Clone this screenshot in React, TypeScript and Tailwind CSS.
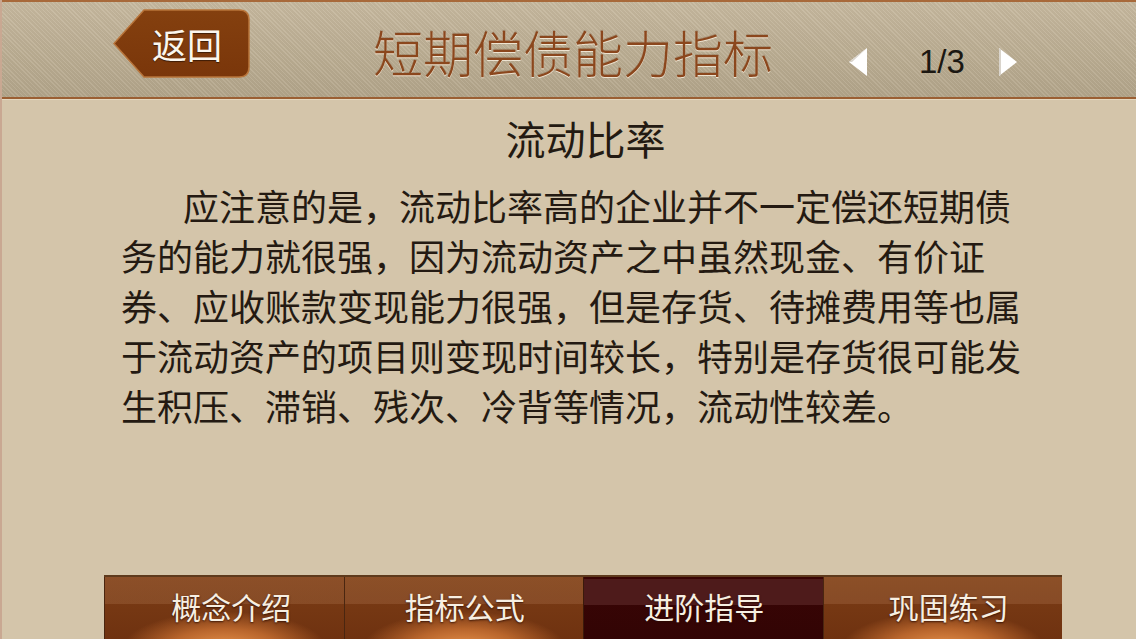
import React from "react";

const cjk = { fontFamily: '"Noto Sans CJK SC", "Noto Sans", sans-serif' };

const lines = [
  "应注意的是，流动比率高的企业并不一定偿还短期债",
  "务的能力就很强，因为流动资产之中虽然现金、有价证",
  "券、应收账款变现能力很强，但是存货、待摊费用等也属",
  "于流动资产的项目则变现时间较长，特别是存货很可能发",
  "生积压、滞销、残次、冷背等情况，流动性较差。",
];

const tabs = [
  { t: "概念介绍", pad: "pl-[14px]" },
  { t: "指标公式", pad: "pl-[2px]" },
  { t: "进阶指导", pad: "pl-[2px]" },
  { t: "巩固练习", pad: "pl-[12px]" },
];

function BackButton() {
  return (
    <div className="relative w-[137px] h-[69px] mt-[7px] flex items-center pl-[39px] shrink-0">
      <svg className="absolute inset-0" width="137" height="69" viewBox="0 0 137 69">
        <defs>
          <linearGradient id="bb" x1="0" y1="0" x2="0" y2="1">
            <stop offset="0" stopColor="#84400f" />
            <stop offset="1" stopColor="#7a360a" />
          </linearGradient>
        </defs>
        <path
          d="M1,34.5 L31,1 H126 Q136,1 136,11 V58 Q136,68 126,68 H31 Z"
          fill="url(#bb)"
          stroke="#b8743a"
          strokeWidth="1.5"
        />
      </svg>
      <span className="relative text-[35px] leading-[35px] text-[#fbf6ee] [text-shadow:0_1px_1px_rgba(0,0,0,0.5)]" style={cjk}>
        返回
      </span>
    </div>
  );
}

function Tri({ dir }: { dir: "l" | "r" }) {
  return (
    <svg width="18" height="28" viewBox="0 0 18 28" className="shrink-0">
      {dir === "l" ? (
        <>
          <polygon points="18,0 18,28 0,14" fill="#ffffff" />
          <polygon points="18,0 0,14 3,14" fill="#d9d4cc" />
        </>
      ) : (
        <>
          <polygon points="0,0 0,28 18,14" fill="#ffffff" />
          <polygon points="0,0 0,28 2,27 2,1" fill="#d9d4cc" />
        </>
      )}
    </svg>
  );
}

export default function App() {
  return (
    <div className="w-[1136px] h-[639px] overflow-hidden flex flex-col bg-[#d4c5aa] border-l-2 border-[#c9a892]" style={cjk}>
      {/* Header */}
      <div className="h-[99px] shrink-0 flex items-start border-t-2 border-[#a8693a] border-b-2 border-b-[#9b5f33] bg-[repeating-linear-gradient(45deg,rgba(255,255,255,0.07)_0px,rgba(255,255,255,0.07)_1px,rgba(0,0,0,0.03)_1px,rgba(0,0,0,0.03)_3px),linear-gradient(to_bottom,#c7b99f,#b3a58a)] pl-[111px]">
        <BackButton />
        <div className="ml-[123px] mt-[24px] text-[50px] leading-[50px] font-light text-[#8b471d] [text-shadow:0_1px_0_rgba(255,245,230,0.75),0_-1px_0_rgba(90,40,10,0.2)] whitespace-nowrap">
          短期偿债能力指标
        </div>
        <div className="ml-[76px] mt-[43px] flex items-center">
          <Tri dir="l" />
          <span className="ml-[52px] text-[33px] leading-[33px] text-[#1c1812]" style={{ fontFamily: '"Liberation Sans", Arial, sans-serif' }}>
            1/3
          </span>
          <span className="ml-[34px]">
            <Tri dir="r" />
          </span>
        </div>
      </div>
      <div className="h-[1px] bg-[#e4d7bf] shrink-0" />

      {/* Content */}
      <div className="flex-1 flex flex-col pl-[119px] w-[1040px]">
        <div className="mt-[18px] text-center pl-[8px] text-[40px] leading-[40px] text-[#231a12]">流动比率</div>
        <div className="mt-[22px] flex flex-col text-[36px] leading-[50px] text-[#241a12]">
          {lines.map((l, i) => (
            <div key={i} className={"whitespace-nowrap " + (i === 0 ? "pl-[62px]" : "")}>
              {l}
            </div>
          ))}
        </div>
      </div>

      {/* Tabs */}
      <div className="ml-[102px] w-[958px] h-[64px] shrink-0 flex border-t-2 border-[#5e3a1c] bg-[#5a2c10]">
        {tabs.map(({ t, pad }, i) => {
          const active = i === 2;
          return (
            <div
              key={t}
              className={
                (active
                  ? "w-1/4 shrink-0 relative flex justify-center pt-[14px] border-l border-[#3b1a0a] bg-[linear-gradient(to_bottom,transparent_0px,transparent_2px,#4e1b1b_2px,#4e1b1b_28px,transparent_28px),linear-gradient(#3a0505,#320404)]"
                  : "w-1/4 shrink-0 relative flex justify-center pt-[14px] border-l border-[#4a2610] bg-[linear-gradient(to_bottom,rgba(255,210,170,0.12)_0px,rgba(255,210,170,0.12)_27px,transparent_27px),radial-gradient(ellipse_50%_70%_at_50%_115%,#e8934c_0%,#b8652c_45%,transparent_85%),linear-gradient(#7c3d16,#6f3210)]") +
                " " +
                pad
              }
            >
              <span className="text-[30px] leading-[30px] text-[#f7efe2] [text-shadow:0_1px_2px_rgba(40,10,0,0.8)]">{t}</span>
            </div>
          );
        })}
      </div>
    </div>
  );
}
